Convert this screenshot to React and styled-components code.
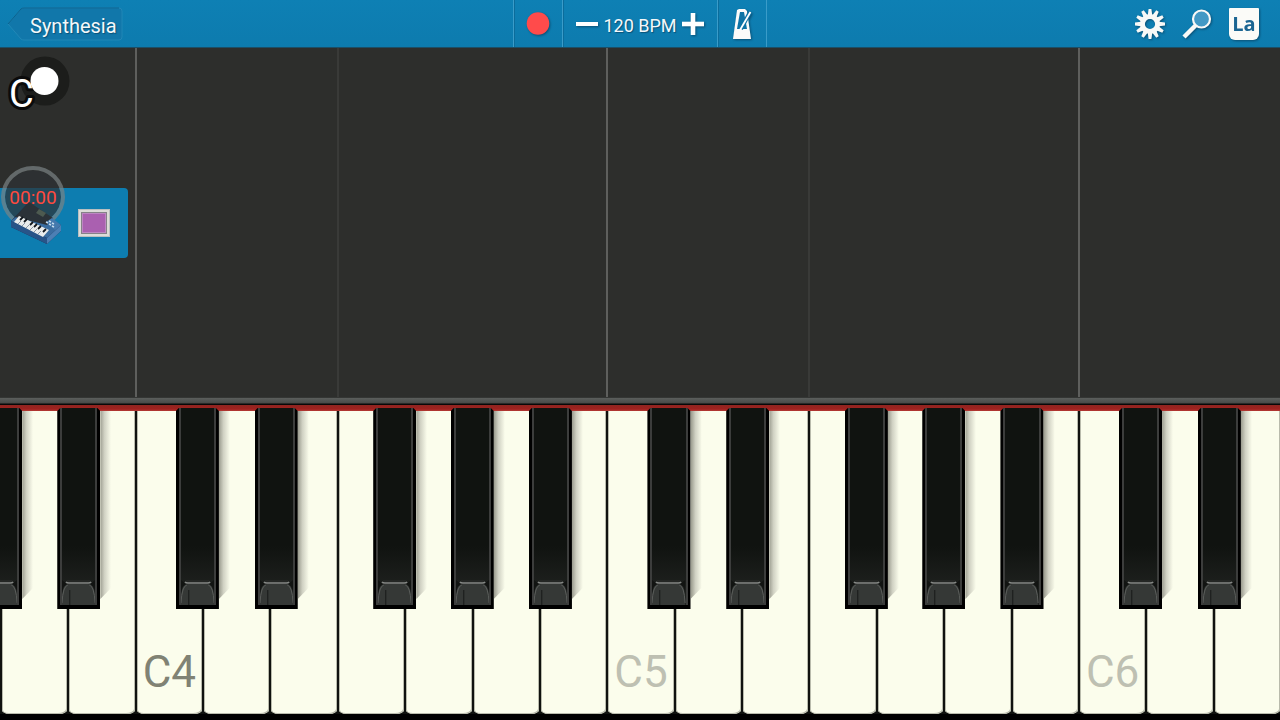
import React from "react";
import styled, { createGlobalStyle, css } from "styled-components";

const GlobalStyle = createGlobalStyle`
  * { box-sizing: border-box; }
  html, body { margin: 0; background: #000; }
  body, button { font-family: Roboto, "Liberation Sans", sans-serif; }
  button { margin: 0; padding: 0; border: 0; background: none; color: inherit; cursor: pointer; }
  svg { display: block; }
`;

const Screen = styled.main`
  position: relative;
  display: flex;
  flex-direction: column;
  min-height: 100vh;
  overflow: hidden;
`;

const Toolbar = styled.header`
  display: grid;
  grid-template-columns: 1fr auto 1fr;
  height: 48px;
  background: linear-gradient(#0e80b4, #0d7bae);
  border-bottom: 1px solid #1c4e66;
  color: #f4f8fa;
`;

const BackButton = styled.button`
  position: relative;
  width: 116px;
  height: 34px;
  margin: 7px 0 0 7px;
  padding: 2px 0 0 23px;
  font-size: 20px;
  line-height: 34px;
  text-align: left;
  text-shadow: 1px 1px 1px #0a5278;

  svg { position: absolute; inset: 0; }
  span { position: relative; }
`;

const Transport = styled.div`
  display: flex;
  border-right: 1px solid #3a9cc9;
`;

const Cell = styled.div`
  display: flex;
  align-items: center;
  justify-content: center;
  width: ${(p) => p.$width}px;
  border-left: 1px solid #3a9cc9;
  box-shadow: inset 1px 0 0 #0b6c9b;
`;

const IconButton = styled.button`
  display: flex;
  align-items: center;
  justify-content: center;
  width: ${(p) => p.$width || 32}px;
  height: 47px;
  filter: drop-shadow(1px 1px 1px #0a4f74);
`;

const Tempo = styled.span`
  width: 78px;
  padding-top: 4px;
  font-size: 18px;
  line-height: 24px;
  text-align: center;
  text-shadow: 1px 1px 1px #0a5278;
  white-space: nowrap;
`;

const Tools = styled.nav`
  display: flex;
  justify-content: flex-end;
  gap: 15px;
  padding-right: 20px;
`;

const Solfege = styled.span`
  width: 30px;
  height: 32px;
  border-radius: 1px 1px 6px 6px;
  background: #fbfbf8;
  color: #1b6592;
  font: 700 20px/32px "Open Sans", sans-serif;
  text-align: center;
`;

const octave = css`
  display: grid;
  grid-template-columns: repeat(19, minmax(0, 1fr));
`;

const Stage = styled.section`
  ${octave}
  position: relative;
  flex: 1;
  min-height: 240px;
  background: #2d2e2c;
`;

const lineColors = { C: "#5e5f5d", F: "#393a38" };

const Lane = styled.div`
  border-left: 2px solid ${(p) => lineColors[p.$note] || "transparent"};
`;

const Rail = styled.div`
  height: 14px;
  background: linear-gradient(
    #343634 0 1px, #5b5e5c 1px, #484b49 6px, #080808 7px 8px,
    #8f2520 8px, #a0211f 12px, #b33b35 14px
  );
`;

const Keyboard = styled.section`
  ${octave}
  height: 309px;
  padding-bottom: 6px;
  background: #000;
`;

const KeySlot = styled.div`
  position: relative;
  padding-left: 2px;
  background: #10120f;
`;

const WhiteKey = styled.button`
  display: flex;
  align-items: flex-end;
  width: 100%;
  height: 100%;
  padding: 0 0 14px 6px;
  border-radius: 0 0 8px 8px / 0 0 4px 4px;
  background: #fbfdec;
  box-shadow: inset 1px 0 0 #b9bbac, inset -1px -1px 0 #b9bbac;
  color: ${(p) => (p.$middle ? "#808274" : "#bec0b2")};
  font-size: 44px;
  line-height: 56px;
`;

const KeyShade = styled.span`
  position: absolute;
  z-index: 1;
  top: 0;
  left: ${(p) => p.$left}%;
  width: 64%;
  height: 198px;
  pointer-events: none;

  &::after {
    content: "";
    position: absolute;
    top: 0;
    left: 100%;
    width: 11px;
    height: 188px;
    background: linear-gradient(90deg, #9b9c8f, #d0d1c3 40%, #fbfdec00);
    clip-path: polygon(0 0, 100% 0, 100% 94%, 0 100%);
  }
`;

const BlackKey = styled.button`
  position: absolute;
  z-index: 2;
  top: -3px;
  left: ${(p) => p.$left}%;
  width: 64%;
  height: 201px;
  padding: 0 3px 4px;
  background: #000;
  clip-path: polygon(3px 0, calc(100% - 3px) 0, 100% 3px, 100% 100%, 0 100%, 0 3px);
`;

const KeyFace = styled.span`
  display: flex;
  flex-direction: column;
  justify-content: flex-end;
  height: 100%;
  border: solid #3c3d3c;
  border-width: 0 2px;
  background: linear-gradient(#101310 70%, #242624);
`;

const SidePanel = styled.aside`
  position: absolute;
  top: 0;
  left: 0;
  width: 128px;
  height: 100%;
`;

const ChordBadge = styled.div`
  position: absolute;
  top: 7px;
  left: 7px;
`;

const Track = styled.div`
  position: absolute;
  top: 140px;
  left: 0;
  display: flex;
  align-items: center;
  gap: 16px;
  width: 128px;
  height: 70px;
  padding-left: 10px;
  border-radius: 0 4px 4px 0;
  background: #0d7db0;

  svg { position: relative; z-index: 2; }
`;

const Swatch = styled.button`
  width: 32px;
  height: 28px;
  border: 3px solid #dcdcd8;
  background: #aa60b0;
  outline: 1px solid #b9bfc0;
  outline-offset: -1px;
  box-shadow: inset 0 0 0 1px #858188, inset 0 0 0 2px #bd86c2;
`;

const Timer = styled.time`
  position: absolute;
  z-index: 1;
  top: 118px;
  left: 1px;
  display: flex;
  justify-content: center;
  width: 64px;
  height: 62px;
  border: 4px solid #7b8385b3;
  border-radius: 50%;
  background: #2d3234b3;
  background-clip: padding-box;
  color: #ff4a3e;
  font-size: 19px;
  line-height: 56px;
`;

const NOTES = ["A", "B", "C", "D", "E", "F", "G"];
const SHARP_LEFT = { C: 61, D: 78, F: 54, G: 69, A: 85 };
const KEYS = Array.from({ length: 19 }, (_, i) => {
  const note = NOTES[i % 7];
  return { note, octave: 3 + Math.floor((i + 5) / 7) };
});

function Sharp({ left, name }) {
  return (
    <>
      <KeyShade $left={left} />
      <BlackKey $left={left} type="button" aria-label={name}>
        <KeyFace>
          <svg width="100%" height="25" viewBox="0 0 34 25" preserveAspectRatio="none">
            <path d="M0 0 5 4H29L34 0V25H0Z" fill="#121412" />
            <path d="M5 0H29V3H5Z" fill="#242624" />
            <path d="M0 25V15Q1 4 7 4H27Q33 4 34 15V25Z" fill="#353836" />
            <path d="M0 23Q1 6 6 5M34 23Q33 6 28 5" fill="none" stroke="#5a5d5a" />
            <path d="M4 2Q5 3 7 3H27Q29 3 30 2" fill="none" stroke="#858885" strokeWidth="1.5" />
            <path d="M8 10V25" stroke="#171917" />
          </svg>
        </KeyFace>
      </BlackKey>
    </>
  );
}

function Gear() {
  return (
    <svg width="30" height="30" viewBox="0 0 30 30">
      <g fill="#f8f9f7">
        {Array.from({ length: 12 }, (_, i) => (
          <path key={i} d="M12.8 6 13.6 0h2.8l.8 6Z" transform={`rotate(${i * 30} 15 15)`} />
        ))}
      </g>
      <circle cx="15" cy="15" r="7.6" fill="none" stroke="#f8f9f7" strokeWidth="5" />
    </svg>
  );
}

function Synth() {
  return (
    <svg width="52" height="44" viewBox="0 0 52 44">
      <path d="M1 20 17 3 51 24V30L37 43 1 26Z" fill="#152f52" />
      <path d="M1 20 12 11 51 24 37 37Z" fill="#3a6da0" />
      <path d="M5 16 19 1 43 17 37 24Z" fill="#2b3238" />
      <path d="m29 8 7 4-3 4-7-4Z" fill="#4d5a50" />
      <path d="M36 21 42 17 51 24 45 29Z" fill="#4479ad" />
      <path d="M1 20 37 37V43L1 26Z" fill="#285488" />
      <path d="m37 37 14-13v6L37 43Z" fill="#4c7fb4" />
      <path d="M4 21 9 15 39 29 33 36Z" fill="#e9ecec" />
      <path d="m8 23 3-3m1 5 3-3m1 5 3-3m1 5 3-3m1 5 3-3m1 5 3-3" stroke="#8b98a6" />
      <path d="m10 19 3-3m1 5 3-3m3 6 3-3m1 5 3-3m1 5 3-3m2 6 3-3" stroke="#10151b" strokeWidth="1.8" />
      <path d="m36 21 2 1m1 1 2 1m1 1 2 1m-5-6 2 1m1 1 2 1" stroke="#c5daec" strokeWidth="1.5" />
    </svg>
  );
}

export default function App() {
  return (
    <>
      <GlobalStyle />
      <Screen>
        <Toolbar>
          <BackButton type="button">
            <svg width="116" height="34" viewBox="0 0 116 34">
              <path d="M1 17 14 2Q15 1 17 1H112Q115 1 115 4V30Q115 33 112 33H17Q15 33 14 32Z" fill="#1177aa" stroke="#2187b6" />
              <path d="M1 17 14 2Q15 1 17 1H112" fill="none" stroke="#0a628f" />
            </svg>
            <span>Synthesia</span>
          </BackButton>
          <Transport>
            <Cell $width={49}>
              <IconButton type="button" aria-label="Record">
                <svg width="24" height="24" viewBox="0 0 24 24"><circle cx="12" cy="11.5" r="11.3" fill="#ff4b4b" /></svg>
              </IconButton>
            </Cell>
            <Cell $width={155}>
              <IconButton type="button" aria-label="Slower" $width={28}>
                <svg width="22" height="22" viewBox="0 0 22 22"><path d="M0 9H22V13H0Z" fill="#fff" /></svg>
              </IconButton>
              <Tempo>120 BPM</Tempo>
              <IconButton type="button" aria-label="Faster" $width={28}>
                <svg width="22" height="22" viewBox="0 0 22 22"><path d="M0 9H9V0H13V9H22V13H13V22H9V13H0Z" fill="#fff" stroke="#fff" strokeWidth=".6" /></svg>
              </IconButton>
            </Cell>
            <Cell $width={49}>
              <IconButton type="button" aria-label="Metronome">
                <svg width="20" height="32" viewBox="0 0 20 32">
                  <path d="M5 2 7 1H13L15 3 19 31H1Z" fill="#fbfbfa" />
                  <path d="M8 4H12L15 21H5Z" fill="#0d73a5" />
                  <path d="M9 21 18 4" stroke="#0d73a5" strokeWidth="4" />
                  <path d="M8 22 18.5 4" stroke="#fff" strokeWidth="1.8" />
                </svg>
              </IconButton>
            </Cell>
          </Transport>
          <Tools>
            <IconButton type="button" aria-label="Settings"><Gear /></IconButton>
            <IconButton type="button" aria-label="Search">
              <svg width="30" height="30" viewBox="0 0 30 30">
                <path d="M14 16 2 28" stroke="#f8f9f7" strokeWidth="4.5" />
                <circle cx="19.5" cy="10" r="8.5" fill="#4299c5" stroke="#f8f9f7" strokeWidth="2.2" />
              </svg>
            </IconButton>
            <IconButton type="button"><Solfege>La</Solfege></IconButton>
          </Tools>
        </Toolbar>

        <Stage>
          {KEYS.map((k, i) => <Lane key={i} $note={k.note} />)}
          <SidePanel>
            <ChordBadge>
              <svg width="64" height="62" viewBox="0 0 64 62">
                <circle cx="38" cy="26" r="24.5" fill="#1c1d1b" />
                <text x="2" y="52" fontFamily="Roboto, sans-serif" fontSize="38" fill="#fff" stroke="#0b0b0b" strokeWidth="6" strokeLinejoin="round" paintOrder="stroke">C</text>
                <circle cx="37.5" cy="26" r="14" fill="#fff" />
              </svg>
            </ChordBadge>
            <Track>
              <Synth />
              <Swatch type="button" aria-label="Track color" />
            </Track>
            <Timer>00:00</Timer>
          </SidePanel>
        </Stage>

        <Rail />

        <Keyboard>
          {KEYS.map((k, i) => (
            <KeySlot key={i}>
              <WhiteKey type="button" $middle={k.octave === 4} aria-label={`${k.note}${k.octave}`}>
                {k.note === "C" && `C${k.octave}`}
              </WhiteKey>
              {i === 0 && <Sharp left={-31} name="G#3" />}
              {SHARP_LEFT[k.note] && i < 18 && (
                <Sharp left={SHARP_LEFT[k.note]} name={`${k.note}#${k.octave}`} />
              )}
            </KeySlot>
          ))}
        </Keyboard>
      </Screen>
    </>
  );
}
